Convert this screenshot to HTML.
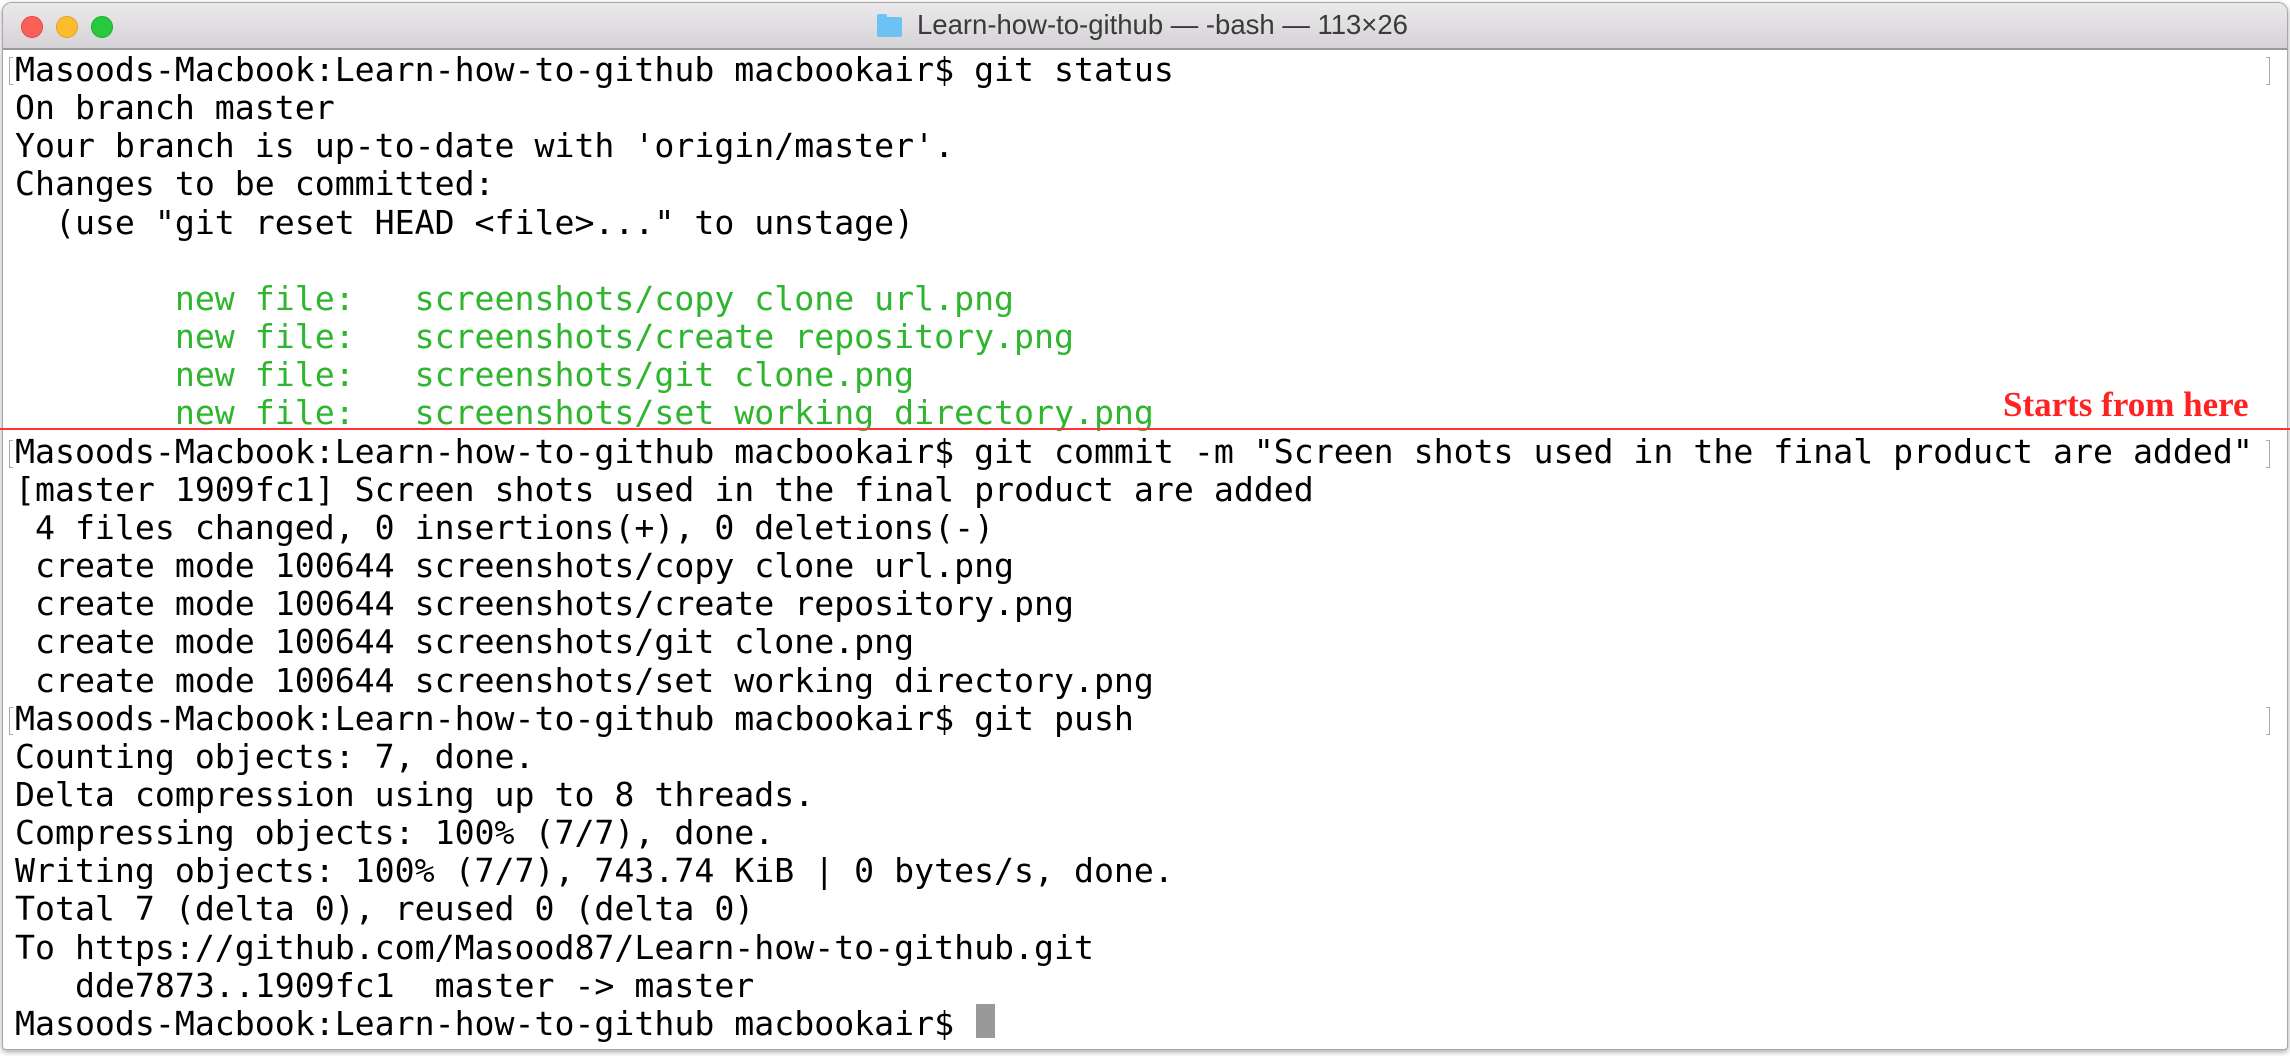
<!DOCTYPE html>
<html><head><meta charset="utf-8"><style>
html,body{margin:0;padding:0;background:#fff;width:2290px;height:1056px;overflow:hidden}
.win{position:absolute;left:2px;top:2px;width:2284px;height:1046px;border:1px solid #a8a8a8;border-radius:10px 10px 4px 4px;overflow:hidden;background:#fff;box-shadow:0 2px 6px rgba(0,0,0,.35)}
.tb{position:absolute;left:0;top:0;width:100%;height:45px;background:linear-gradient(#ebe9eb,#d5d3d5);border-bottom:2px solid #9a9a9a}
.dot{position:absolute;top:13px;width:20px;height:20px;border-radius:50%}
.title{position:absolute;left:914px;top:6px;font:27.5px "Liberation Sans",sans-serif;color:#3a3a3a;white-space:nowrap}
.folder{position:absolute;left:874px;top:14px;width:25px;height:20px;background:#6cc3f3;border-radius:2px}
.folder:before{content:"";position:absolute;left:0;top:-3px;width:10px;height:4px;background:#6cc3f3;border-radius:2px 2px 0 0}
.term{position:absolute;left:15px;top:51px;font:33.2px/38.15px "DejaVu Sans Mono","Liberation Mono",monospace;color:#000;white-space:pre;letter-spacing:0}
.g{color:#2fb52f}
.red{position:absolute;left:0;top:428px;width:2290px;height:2px;background:#f33}
.st{position:absolute;left:2003px;top:385px;font:bold 35px "Liberation Serif",serif;color:#f22;white-space:nowrap}
.cur{position:absolute;left:976px;top:1004px;width:19px;height:34px;background:#999}
.mk{position:absolute;left:9px;width:3px;height:26px;border:1px solid #aaa;border-right:none}
.mr{position:absolute;left:2266px;width:3px;height:26px;border:1px solid #aaa;border-left:none}
</style></head><body>
<div class="win">
<div class="tb">
<div class="dot" style="left:18px;background:#fc5f57;border:1px solid #df4744"></div>
<div class="dot" style="left:53px;background:#fdbc2e;border:1px solid #dea123"></div>
<div class="dot" style="left:88px;background:#28c83f;border:1px solid #1eac2c"></div>
<div class="folder"></div>
<div class="title">Learn-how-to-github — -bash — 113×26</div>
</div>
</div>
<div class="mk" style="top:57px"></div>
<div class="mr" style="top:57px"></div>
<div class="mk" style="top:440px"></div>
<div class="mr" style="top:440px"></div>
<div class="mk" style="top:707px"></div>
<div class="mr" style="top:707px"></div>
<div class="term">Masoods-Macbook:Learn-how-to-github macbookair$ git status
On branch master
Your branch is up-to-date with 'origin/master'.
Changes to be committed:
  (use "git reset HEAD &lt;file&gt;..." to unstage)

<span class="g">        new file:   screenshots/copy clone url.png</span>
<span class="g">        new file:   screenshots/create repository.png</span>
<span class="g">        new file:   screenshots/git clone.png</span>
<span class="g">        new file:   screenshots/set working directory.png</span>
Masoods-Macbook:Learn-how-to-github macbookair$ git commit -m "Screen shots used in the final product are added"
[master 1909fc1] Screen shots used in the final product are added
 4 files changed, 0 insertions(+), 0 deletions(-)
 create mode 100644 screenshots/copy clone url.png
 create mode 100644 screenshots/create repository.png
 create mode 100644 screenshots/git clone.png
 create mode 100644 screenshots/set working directory.png
Masoods-Macbook:Learn-how-to-github macbookair$ git push
Counting objects: 7, done.
Delta compression using up to 8 threads.
Compressing objects: 100% (7/7), done.
Writing objects: 100% (7/7), 743.74 KiB | 0 bytes/s, done.
Total 7 (delta 0), reused 0 (delta 0)
To https://github.com/Masood87/Learn-how-to-github.git
   dde7873..1909fc1  master -&gt; master
Masoods-Macbook:Learn-how-to-github macbookair$ </div>
<div class="cur"></div>
<div class="red"></div>
<div class="st">Starts from here</div>
</body></html>
